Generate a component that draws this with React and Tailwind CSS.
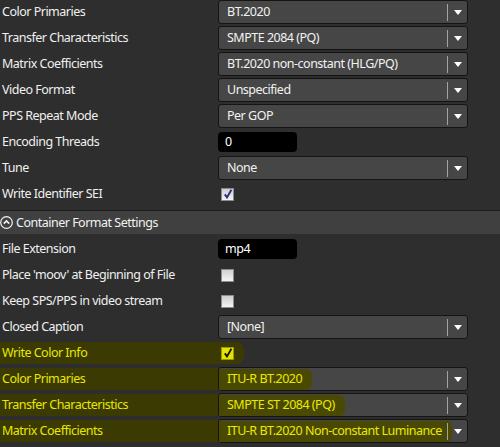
import React from 'react';

const HL = 'bg-[#3b3a02]';
const HL_IN = 'bg-[#4a4904]';

const topRows = [
  { label: 'Color Primaries', type: 'select', value: 'BT.2020' },
  { label: 'Transfer Characteristics', type: 'select', value: 'SMPTE 2084 (PQ)' },
  { label: 'Matrix Coefficients', type: 'select', value: 'BT.2020 non-constant (HLG/PQ)' },
  { label: 'Video Format', type: 'select', value: 'Unspecified' },
  { label: 'PPS Repeat Mode', type: 'select', value: 'Per GOP' },
  { label: 'Encoding Threads', type: 'text', value: '0' },
  { label: 'Tune', type: 'select', value: 'None' },
  { label: 'Write Identifier SEI', type: 'check', checked: true },
];

const containerRows = [
  { label: 'File Extension', type: 'text', value: 'mp4' },
  { label: "Place 'moov' at Beginning of File", type: 'check', checked: false },
  { label: 'Keep SPS/PPS in video stream', type: 'check', checked: false },
  { label: 'Closed Caption', type: 'select', value: '[None]' },
  { label: 'Write Color Info', type: 'check', checked: true, hl: true },
  { label: 'Color Primaries', type: 'select', value: 'ITU-R BT.2020', hl: true },
  { label: 'Transfer Characteristics', type: 'select', value: 'SMPTE ST 2084 (PQ)', hl: true },
  { label: 'Matrix Coefficients', type: 'select', value: 'ITU-R BT.2020 Non-constant Luminance', hl: true },
];

const Select = ({ value, hl }) => (
  <div className="flex h-[24px] w-[250px] items-center rounded-[3px] border border-[#141414] bg-[#464646]">
    <div className="flex h-full min-w-0 flex-1 items-center">
      <span
        className={`flex h-[21px] items-center whitespace-nowrap pl-[8px] pt-[1px] ${
          hl ? `${HL_IN} rounded-r-[6px] pr-[10px] text-[#eaea00]` : 'text-[#f2f2f2]'
        }`}
      >
        {value}
      </span>
    </div>
    <div className="h-[17px] w-px bg-[#a3a3a3]" />
    <div className="flex w-[19px] items-center justify-center pt-[1px]">
      <svg width="8" height="5" viewBox="0 0 8 5">
        <path d="M0 0 L8 0 L4 5 Z" fill="#ffffff" />
      </svg>
    </div>
  </div>
);

const TextBox = ({ value }) => (
  <div className="flex h-[20px] w-[79px] items-center rounded-[4px] bg-black pl-[7px] text-white">
    {value}
  </div>
);

const Check = ({ checked, hl }) => (
  <div
    className={`ml-[3px] flex h-[13px] w-[13px] items-center justify-center border ${
      hl
        ? 'border-[#9a9a00] bg-[#e4e400]'
        : 'border-[#8c8c8c] bg-gradient-to-b from-[#cfcfcf] to-[#f4f4f4]'
    }`}
  >
    {checked && (
      <svg width="10" height="10" viewBox="0 0 10 10">
        <path
          d="M1.8 5.4 L4 8.4 L8.4 0.8"
          fill="none"
          stroke={hl ? '#1a1a00' : '#2c2c86'}
          strokeWidth="1.9"
        />
      </svg>
    )}
  </div>
);

const Row = ({ row }) => (
  <div className="flex h-[26px] items-center pb-[2px]">
    <div
      className={`flex h-[22px] w-[218px] shrink-0 items-center pl-[2px] pt-[1px] whitespace-nowrap ${
        row.hl ? `${HL} text-[#e8e800]` : 'text-[#f0f0f0]'
      }`}
    >
      {row.label}
    </div>
    {row.type === 'select' && <Select value={row.value} hl={row.hl} />}
    {row.type === 'text' && <TextBox value={row.value} />}
    {row.type === 'check' && (
      <div
        className={`flex h-[22px] w-[26px] items-center ${row.hl ? `${HL} rounded-r-[8px]` : ''}`}
      >
        <Check checked={row.checked} hl={row.hl} />
      </div>
    )}
  </div>
);

export default function App() {
  return (
    <div className="h-[447px] w-[500px] overflow-hidden bg-[#2e2e2e] font-['Noto_Sans',sans-serif] text-[12.5px] leading-none tracking-[-0.5px]">
      {topRows.map((r, i) => (
        <Row key={'t' + i} row={r} />
      ))}
      <div className="pt-[2px] pb-[3px]">
        <div className="flex h-[24px] items-center gap-[3px] border-t border-[#1c1c1c] bg-[#404040] text-[12.5px] text-[#f2f2f2]">
          <svg width="13" height="13" viewBox="0 0 13 13">
            <circle cx="6.5" cy="6.5" r="5.8" fill="none" stroke="#f2f2f2" strokeWidth="1.2" />
            <path d="M3.8 7.6 L6.5 4.9 L9.2 7.6" fill="none" stroke="#f2f2f2" strokeWidth="1.6" />
          </svg>
          <span className="pt-[1px]">Container Format Settings</span>
        </div>
      </div>
      {containerRows.map((r, i) => (
        <Row key={'c' + i} row={r} />
      ))}
    </div>
  );
}
